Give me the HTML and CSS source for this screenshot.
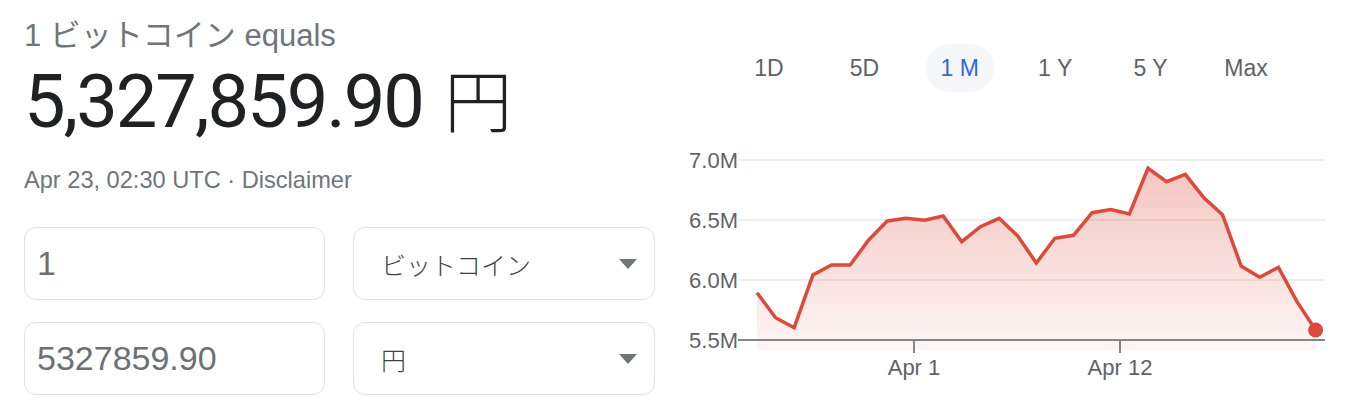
FILE: index.html
```html
<!DOCTYPE html>
<html lang="ja">
<head>
<meta charset="utf-8">
<title>Bitcoin to Yen</title>
<link rel="stylesheet" href="styles.css">
</head>
<body>
<div class="page">
  <section class="left">
    <div class="title">1 <span class="ja">ビットコイン</span> equals</div>
    <div class="value">5,327,859.90 <span class="yen">円</span></div>
    <div class="meta">Apr 23, 02:30 UTC · <span class="link">Disclaimer</span></div>
    <div class="form">
      <div class="box input">1</div>
      <div class="box select"><span class="ja-sel">ビットコイン</span><span class="arrow"></span></div>
      <div class="box input">5327859.90</div>
      <div class="box select"><span class="ja-sel">円</span><span class="arrow"></span></div>
    </div>
  </section>
  <section class="right">
    <div class="ranges">
      <div class="range">1D</div>
      <div class="range">5D</div>
      <div class="range active">1 M</div>
      <div class="range">1 Y</div>
      <div class="range">5 Y</div>
      <div class="range">Max</div>
    </div>
    <svg class="chart" width="660" height="250" viewBox="680 140 660 250" xmlns="http://www.w3.org/2000/svg">
      <defs>
        <linearGradient id="fillGrad" x1="0" y1="160" x2="0" y2="350" gradientUnits="userSpaceOnUse">
          <stop offset="0" stop-color="#db4437" stop-opacity="0.32"/>
          <stop offset="1" stop-color="#db4437" stop-opacity="0.05"/>
        </linearGradient>
      </defs>
      <g class="grid">
        <line x1="738" y1="160" x2="1325" y2="160"/>
        <line x1="738" y1="220" x2="1325" y2="220"/>
        <line x1="738" y1="280" x2="1325" y2="280"/>
      </g>
      <polygon class="area" fill="url(#fillGrad)" points="757,292.7 775.6,317.7 794.2,327.7 812.9,275 831.5,265 850.1,265 868.7,240 887.3,221 906,218.3 924.6,220.3 943.2,216 961.8,241.7 980.4,226.7 999.1,218.3 1017.7,236 1036.3,263 1054.9,238.3 1073.5,235.3 1092.2,212.7 1110.8,209.5 1129.4,214 1148,168.3 1166.6,181.7 1185.3,174.3 1203.9,197.8 1222.5,214.7 1241.1,266 1259.7,277.3 1278.4,267.3 1297,301.7 1315.6,330 1315.6,350 757,350"/>
      <line class="axis" x1="738" y1="340" x2="1325" y2="340"/>
      <line class="axis" x1="914" y1="340" x2="914" y2="353"/>
      <line class="axis" x1="1120" y1="340" x2="1120" y2="353"/>
      <polyline class="line" points="757,292.7 775.6,317.7 794.2,327.7 812.9,275 831.5,265 850.1,265 868.7,240 887.3,221 906,218.3 924.6,220.3 943.2,216 961.8,241.7 980.4,226.7 999.1,218.3 1017.7,236 1036.3,263 1054.9,238.3 1073.5,235.3 1092.2,212.7 1110.8,209.5 1129.4,214 1148,168.3 1166.6,181.7 1185.3,174.3 1203.9,197.8 1222.5,214.7 1241.1,266 1259.7,277.3 1278.4,267.3 1297,301.7 1315.6,330"/>
      <circle class="dot" cx="1315.6" cy="330" r="7.5"/>
      <g class="ylabels">
        <text x="738" y="168">7.0M</text>
        <text x="738" y="228">6.5M</text>
        <text x="738" y="288">6.0M</text>
        <text x="738" y="348">5.5M</text>
      </g>
      <g class="xlabels">
        <text x="914" y="375">Apr 1</text>
        <text x="1120" y="375">Apr 12</text>
      </g>
    </svg>
  </section>
</div>
</body>
</html>
```

FILE: styles.css
```css
* { box-sizing: border-box; }
html, body { margin: 0; padding: 0; background: #fff; }
body {
  font-family: "Liberation Sans", Arial, "Noto Sans CJK JP", sans-serif;
  width: 1366px;
  height: 420px;
  overflow: hidden;
}
.page {
  display: flex;
  flex-direction: row;
}
.left {
  width: 680px;
  padding-left: 24px;
  padding-top: 17px;
}
.title {
  height: 36px;
  font-size: 31px;
  line-height: 36px;
  color: #70757a;
  white-space: nowrap;
  overflow: visible;
}
.title .ja {
  font-family: "Noto Sans CJK JP", sans-serif;
  line-height: 1;
}
.value {
  height: 80px;
  margin-top: 9px;
  font-family: Roboto, "Noto Sans CJK JP", sans-serif;
  font-size: 74px;
  line-height: 80px;
  letter-spacing: -2px;
  color: #202124;
  white-space: nowrap;
}
.value .yen {
  font-family: "Noto Sans CJK JP", sans-serif;
  font-weight: 300;
  font-size: 68px;
  letter-spacing: 0;
  line-height: 1;
  margin-left: 5px;
}
.meta {
  height: 32px;
  margin-top: 22px;
  font-size: 23.6px;
  line-height: 32px;
  color: #70757a;
}
.form {
  margin-top: 31px;
  display: grid;
  grid-template-columns: 301px 302px;
  grid-auto-rows: 73px;
  column-gap: 28px;
  row-gap: 22px;
}
.box {
  border: 1.5px solid #dfe1e5;
  border-radius: 12px;
  display: flex;
  align-items: center;
}
.input {
  padding-left: 12px;
  font-size: 34px;
  color: #6d7176;
}
.select {
  padding-left: 27px;
  padding-right: 17px;
  justify-content: space-between;
}
.ja-sel {
  font-family: "Noto Sans CJK JP", sans-serif;
  font-weight: 300;
  font-size: 25px;
  color: #3c4043;
}
.arrow {
  width: 0;
  height: 0;
  border-left: 9.5px solid transparent;
  border-right: 9.5px solid transparent;
  border-top: 10px solid #70757a;
}
.right {
  width: 686px;
}
.ranges {
  margin-top: 44px;
  padding-left: 55px;
  display: flex;
  gap: 27.4px;
}
.range {
  width: 68px;
  height: 48px;
  border-radius: 24px;
  display: flex;
  align-items: center;
  justify-content: center;
  font-size: 23px;
  color: #5f6368;
  white-space: nowrap;
}
.range.active {
  background: #f4f6fa;
  color: #3367d6;
}
.chart {
  display: block;
  margin-top: 48px;
}
.grid line {
  stroke: #efefef;
  stroke-width: 2;
}
.axis {
  stroke: #80868b;
  stroke-width: 2;
}
.line {
  fill: none;
  stroke: #db4a3b;
  stroke-width: 3.5;
  stroke-linejoin: miter;
}
.dot {
  fill: #db4a3b;
}
.ylabels text {
  font-family: "Liberation Sans", Arial, sans-serif;
  font-size: 22px;
  fill: #5f6368;
  text-anchor: end;
}
.xlabels text {
  font-family: "Liberation Sans", Arial, sans-serif;
  font-size: 22px;
  fill: #5f6368;
  text-anchor: middle;
}
```
